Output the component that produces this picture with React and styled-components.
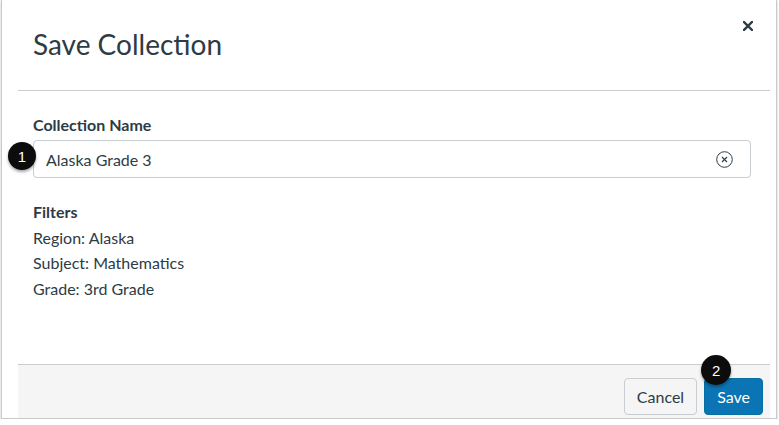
import React from 'react'
import styled, { createGlobalStyle } from 'styled-components'

const GlobalStyle = createGlobalStyle`
  html, body {
    margin: 0;
    padding: 0;
    background: #ffffff;
  }
  body {
    font-family: Lato, "Noto Sans", sans-serif;
    color: #2d3b45;
  }
  * {
    box-sizing: border-box;
  }
`;

const Frame = styled.div`
  width: 776px;
  height: 419px;
  margin-left: 1px;
  border: 1px solid #c9c9c9;
  border-top: none;
  box-shadow: 0 1px 2px rgba(0, 0, 0, 0.25);
  background: #ffffff;
  padding: 0 6px 0 16px;
`;

const Modal = styled.div`
  height: 100%;
  display: flex;
  flex-direction: column;
`;

const Header = styled.header`
  display: flex;
  justify-content: space-between;
  align-items: flex-start;
  height: 91px;
  padding: 0 15px;
  border-bottom: 1px solid #c7cdd1;
`;

const Title = styled.h1`
  margin: 27px 0 0;
  font-size: 28px;
  line-height: 35px;
  font-weight: 400;
  color: #2d3b45;
`;

const CloseButton = styled.button`
  margin: 18px -1px 0 0;
  width: 16px;
  height: 16px;
  padding: 0;
  border: none;
  background: transparent;
  display: flex;
  align-items: center;
  justify-content: center;
  color: #2d3b45;
  cursor: pointer;
`;

const Body = styled.div`
  flex: 1;
  padding: 22px 19px 0 15px;
`;

const Label = styled.div`
  font-size: 16px;
  line-height: 24px;
  font-weight: 700;
`;

const Field = styled.div`
  position: relative;
  margin-top: 3px;
  height: 38px;
  border: 1px solid #c7cdd1;
  border-radius: 4px;
  display: flex;
  align-items: center;
  padding: 0 17px 0 12px;
`;

const TextInput = styled.input`
  flex: 1;
  border: none;
  outline: none;
  padding: 0;
  background: transparent;
  font-family: Lato, "Noto Sans", sans-serif;
  font-size: 16px;
  color: #2d3b45;
`;

const ClearButton = styled.button`
  width: 18px;
  height: 18px;
  padding: 0;
  border: none;
  background: transparent;
  display: flex;
  align-items: center;
  justify-content: center;
  color: #2d3b45;
`;

const Filters = styled.div`
  margin-top: 21px;
  font-size: 16px;
  line-height: 25.6px;
`;

const FilterTitle = styled.div`
  font-weight: 700;
`;

const Footer = styled.footer`
  height: 54px;
  background: #f5f5f5;
  border-top: 1px solid #c7cdd1;
  display: flex;
  justify-content: flex-end;
  align-items: flex-start;
  gap: 7px;
  padding: 13px 7px 0;
`;

const Button = styled.button`
  position: relative;
  height: 37px;
  padding: 0 12px;
  border-radius: 4px;
  font-family: Lato, "Noto Sans", sans-serif;
  font-size: 16px;
  line-height: 1;
  border: 1px solid ${(p) => (p.$primary ? '#0770a3' : '#c7cdd1')};
  background: ${(p) => (p.$primary ? '#0b74b4' : '#f5f5f5')};
  color: ${(p) => (p.$primary ? '#ffffff' : '#2d3b45')};
`;

const Badge = styled.span`
  position: absolute;
  left: ${(p) => p.$left}px;
  top: ${(p) => p.$top}px;
  width: ${(p) => p.$size}px;
  height: ${(p) => p.$size}px;
  border-radius: 50%;
  background: #0c0c0c;
  color: #ffffff;
  font-family: "Liberation Sans", Arial, sans-serif;
  font-size: 15px;
  display: flex;
  align-items: center;
  justify-content: center;
  box-shadow: 0 2px 3px rgba(0, 0, 0, 0.35);
  z-index: 2;
`;

const App = () => {
  return (
    <>
      <GlobalStyle />
      <Frame>
        <Modal>
          <Header>
            <Title>Save Collection</Title>
            <CloseButton aria-label="Close">
              <svg width="10" height="10" viewBox="0 0 10 10">
                <path d="M1 1 L9 9 M9 1 L1 9" stroke="currentColor" strokeWidth="2.4" strokeLinecap="square" />
              </svg>
            </CloseButton>
          </Header>
          <Body>
            <Label>Collection Name</Label>
            <Field>
              <Badge $left={-26} $top={1} $size={28}>1</Badge>
              <TextInput readOnly value="Alaska Grade 3" />
              <ClearButton aria-label="Clear">
                <svg width="17" height="17" viewBox="0 0 17 17">
                  <circle cx="8.5" cy="8.5" r="7.8" fill="none" stroke="currentColor" strokeWidth="1" />
                  <path d="M6 6 L11 11 M11 6 L6 11" stroke="currentColor" strokeWidth="1.1" />
                </svg>
              </ClearButton>
            </Field>
            <Filters>
              <FilterTitle>Filters</FilterTitle>
              <div>Region: Alaska</div>
              <div>Subject: Mathematics</div>
              <div>Grade: 3rd Grade</div>
            </Filters>
          </Body>
          <Footer>
            <Button>Cancel</Button>
            <Button $primary>
              <Badge $left={-4} $top={-24} $size={30}>2</Badge>
              Save
            </Button>
          </Footer>
        </Modal>
      </Frame>
    </>
  )
}

export default App
